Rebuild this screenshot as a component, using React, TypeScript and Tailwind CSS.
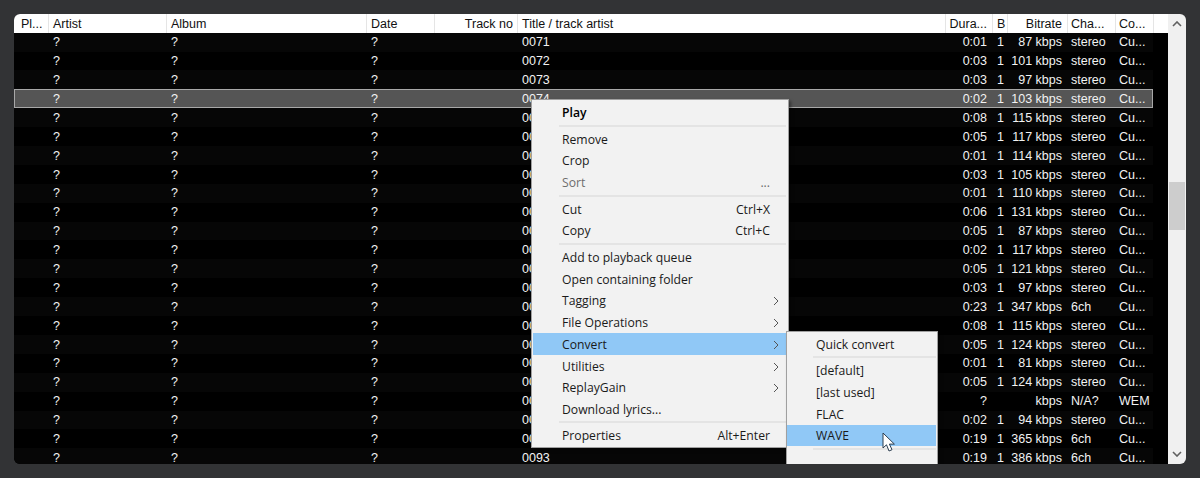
const columns = [
  { label: "Pl...", width: "w-[34px]", head: "pl-[7px]", cell: "" },
  { label: "Artist", width: "w-[118px]", head: "border-l border-[#e5e5e5] pl-[4px]", cell: "pl-[5px]" },
  { label: "Album", width: "w-[200px]", head: "border-l border-[#e5e5e5] pl-[4px]", cell: "pl-[5px]" },
  { label: "Date", width: "w-[68px]", head: "border-l border-[#e5e5e5] pl-[4px]", cell: "pl-[5px]" },
  { label: "Track no", width: "w-[83px]", head: "border-l border-[#e5e5e5] pr-[4px] text-right", cell: "" },
  { label: "Title / track artist", width: "w-[428px]", head: "border-l border-[#e5e5e5] pl-[4px]", cell: "pl-[5px]" },
  { label: "Dura...", width: "w-[47px]", head: "border-l border-[#e5e5e5] pr-[5px] text-right", cell: "pr-[5px] text-right" },
  { label: "B", width: "w-[15px]", head: "border-l border-[#e5e5e5] pl-[4px]", cell: "pl-[5px]" },
  { label: "Bitrate", width: "w-[60px]", head: "border-l border-[#e5e5e5] pr-[5px] text-right", cell: "pr-[5px] text-right" },
  { label: "Cha...", width: "w-[48px]", head: "border-l border-[#e5e5e5] pl-[3px]", cell: "pl-[4px]" },
  { label: "Co...", width: "w-[39px]", head: "border-x border-[#e5e5e5] pl-[3px]", cell: "pl-[4px]" },
];

const tracks = [
  ["0:01", "1", "87 kbps", "stereo"],
  ["0:03", "1", "101 kbps", "stereo"],
  ["0:03", "1", "97 kbps", "stereo"],
  ["0:02", "1", "103 kbps", "stereo"],
  ["0:08", "1", "115 kbps", "stereo"],
  ["0:05", "1", "117 kbps", "stereo"],
  ["0:01", "1", "114 kbps", "stereo"],
  ["0:03", "1", "105 kbps", "stereo"],
  ["0:01", "1", "110 kbps", "stereo"],
  ["0:06", "1", "131 kbps", "stereo"],
  ["0:05", "1", "87 kbps", "stereo"],
  ["0:02", "1", "117 kbps", "stereo"],
  ["0:05", "1", "121 kbps", "stereo"],
  ["0:03", "1", "97 kbps", "stereo"],
  ["0:23", "1", "347 kbps", "6ch"],
  ["0:08", "1", "115 kbps", "stereo"],
  ["0:05", "1", "124 kbps", "stereo"],
  ["0:01", "1", "81 kbps", "stereo"],
  ["0:05", "1", "124 kbps", "stereo"],
  ["?", "", "kbps", "N/A?"],
  ["0:02", "1", "94 kbps", "stereo"],
  ["0:19", "1", "365 kbps", "6ch"],
  ["0:19", "1", "386 kbps", "6ch"],
];

function TrackRow({ index, track }: { index: number; track: string[] }) {
  const selected = index === 3;
  const codec = track[3] === "N/A?" ? "WEM" : "Cu...";
  const values = ["", "?", "?", "?", "", String(71 + index).padStart(4, "0"), track[0], track[1], track[2], track[3], codec];
  const bg = selected
    ? "bg-[#555555] outline outline-1 -outline-offset-1 outline-[#a8a8a8]"
    : index % 2 === 0
      ? "bg-[#060606]"
      : "bg-black";
  return (
    <div className={`flex h-[18.9px] w-[1139px] shrink-0 items-center text-[#f2f2f2] ${bg}`}>
      {columns.map((c, i) => (
        <div key={c.label} className={`shrink-0 truncate whitespace-nowrap pt-[1px] ${c.width} ${c.cell}`}>
          {values[i]}
        </div>
      ))}
    </div>
  );
}

function MenuItem({ label, hint, bold, disabled, arrow, active }: {
  label: string;
  hint?: string;
  bold?: boolean;
  disabled?: boolean;
  arrow?: boolean;
  active?: boolean;
}) {
  return (
    <div className={`flex h-[21.75px] items-center pl-[29px] pt-[2px] ${active ? "bg-[#90c8f6]" : ""}`}>
      <span className={`flex-1 ${bold ? "font-semibold text-black" : disabled ? "text-[#6d6d6d]" : "text-[#1a1a1a]"}`}>{label}</span>
      {hint && <span className={`mr-[16px] ${disabled ? "text-[#6d6d6d]" : "text-[#1a1a1a]"}`}>{hint}</span>}
      {arrow && (
        <svg width="6" height="10" viewBox="0 0 6 10" className="mr-[7px]" fill="none" stroke="#555" strokeWidth="1">
          <path d="M1 1l4 4-4 4" />
        </svg>
      )}
    </div>
  );
}

function MenuSep() {
  return (
    <div className="flex h-[4.7px] items-center pl-[26px]">
      <div className="h-[2px] w-full bg-[#e4e4e4]" />
    </div>
  );
}

function ContextMenu() {
  return (
    <div className="absolute left-[517px] top-[85px] h-[349px] w-[258px] border border-[#a0a0a0] bg-[#f2f2f2] pb-[2px] pl-[1px] pr-[2px] pt-[1.5px] font-['Open_Sans',sans-serif] text-[12.2px] shadow-[2px_2px_3px_rgba(0,0,0,0.4)]">
      <MenuItem label="Play" bold />
      <MenuSep />
      <MenuItem label="Remove" />
      <MenuItem label="Crop" />
      <MenuItem label="Sort" hint="..." disabled />
      <MenuSep />
      <MenuItem label="Cut" hint="Ctrl+X" />
      <MenuItem label="Copy" hint="Ctrl+C" />
      <MenuSep />
      <MenuItem label="Add to playback queue" />
      <MenuItem label="Open containing folder" />
      <MenuItem label="Tagging" arrow />
      <MenuItem label="File Operations" arrow />
      <MenuItem label="Convert" arrow active />
      <MenuItem label="Utilities" arrow />
      <MenuItem label="ReplayGain" arrow />
      <MenuItem label="Download lyrics..." />
      <MenuSep />
      <MenuItem label="Properties" hint="Alt+Enter" />
    </div>
  );
}

function ConvertMenu() {
  return (
    <div className="absolute left-[772px] top-[317px] h-[140px] w-[152px] border border-[#a0a0a0] bg-[#f2f2f2] pb-[2px] pr-[1px] pt-[1px] font-['Open_Sans',sans-serif] text-[12.2px] shadow-[2px_2px_3px_rgba(0,0,0,0.4)]">
      <MenuItem label="Quick convert" />
      <MenuSep />
      <MenuItem label="[default]" />
      <MenuItem label="[last used]" />
      <MenuItem label="FLAC" />
      <MenuItem label="WAVE" active />
      <MenuSep />
      {/* mouse pointer */}
      <svg width="15" height="21" viewBox="0 0 15 21" className="absolute left-[95px] top-[100px]">
        <path d="M1 1v15l3.5-3.2L7 19l3-1.3-2.6-5.6h5z" fill="#fff" stroke="#2c3e50" strokeWidth="1" strokeLinejoin="round" />
      </svg>
    </div>
  );
}

function Scrollbar() {
  return (
    <div className="flex w-[18px] shrink-0 flex-col items-center bg-[#f0f0f0]">
      <svg width="10" height="6" viewBox="0 0 10 6" className="mt-[7px]" fill="none" stroke="#606060" strokeWidth="1.6">
        <path d="M1 5l4-4 4 4" />
      </svg>
      <div className="mt-[155px] h-[48px] w-[16px] bg-[#cdcdcd]" />
      <svg width="10" height="6" viewBox="0 0 10 6" className="mt-auto mb-[7px]" fill="none" stroke="#606060" strokeWidth="1.6">
        <path d="M1 1l4 4 4-4" />
      </svg>
    </div>
  );
}

export default function App() {
  return (
    <div className="h-[478px] w-[1200px] overflow-hidden bg-[#323335] p-[14px] font-['Liberation_Sans',sans-serif] text-[12.5px]">
      <div className="relative flex h-[450px] w-[1172px] overflow-hidden rounded-[6px]">
        <div className="flex min-w-0 flex-1 flex-col bg-black">
          <div className="flex h-[18.7px] shrink-0 items-center bg-white text-[#111]">
            {columns.map((c) => (
              <div key={c.label} className={`h-full shrink-0 truncate whitespace-nowrap leading-[21px] ${c.width} ${c.head}`}>
                {c.label}
              </div>
            ))}
          </div>
          {tracks.map((t, i) => (
            <TrackRow key={i} index={i} track={t} />
          ))}
        </div>
        <Scrollbar />
        <ContextMenu />
        <ConvertMenu />
      </div>
    </div>
  );
}
